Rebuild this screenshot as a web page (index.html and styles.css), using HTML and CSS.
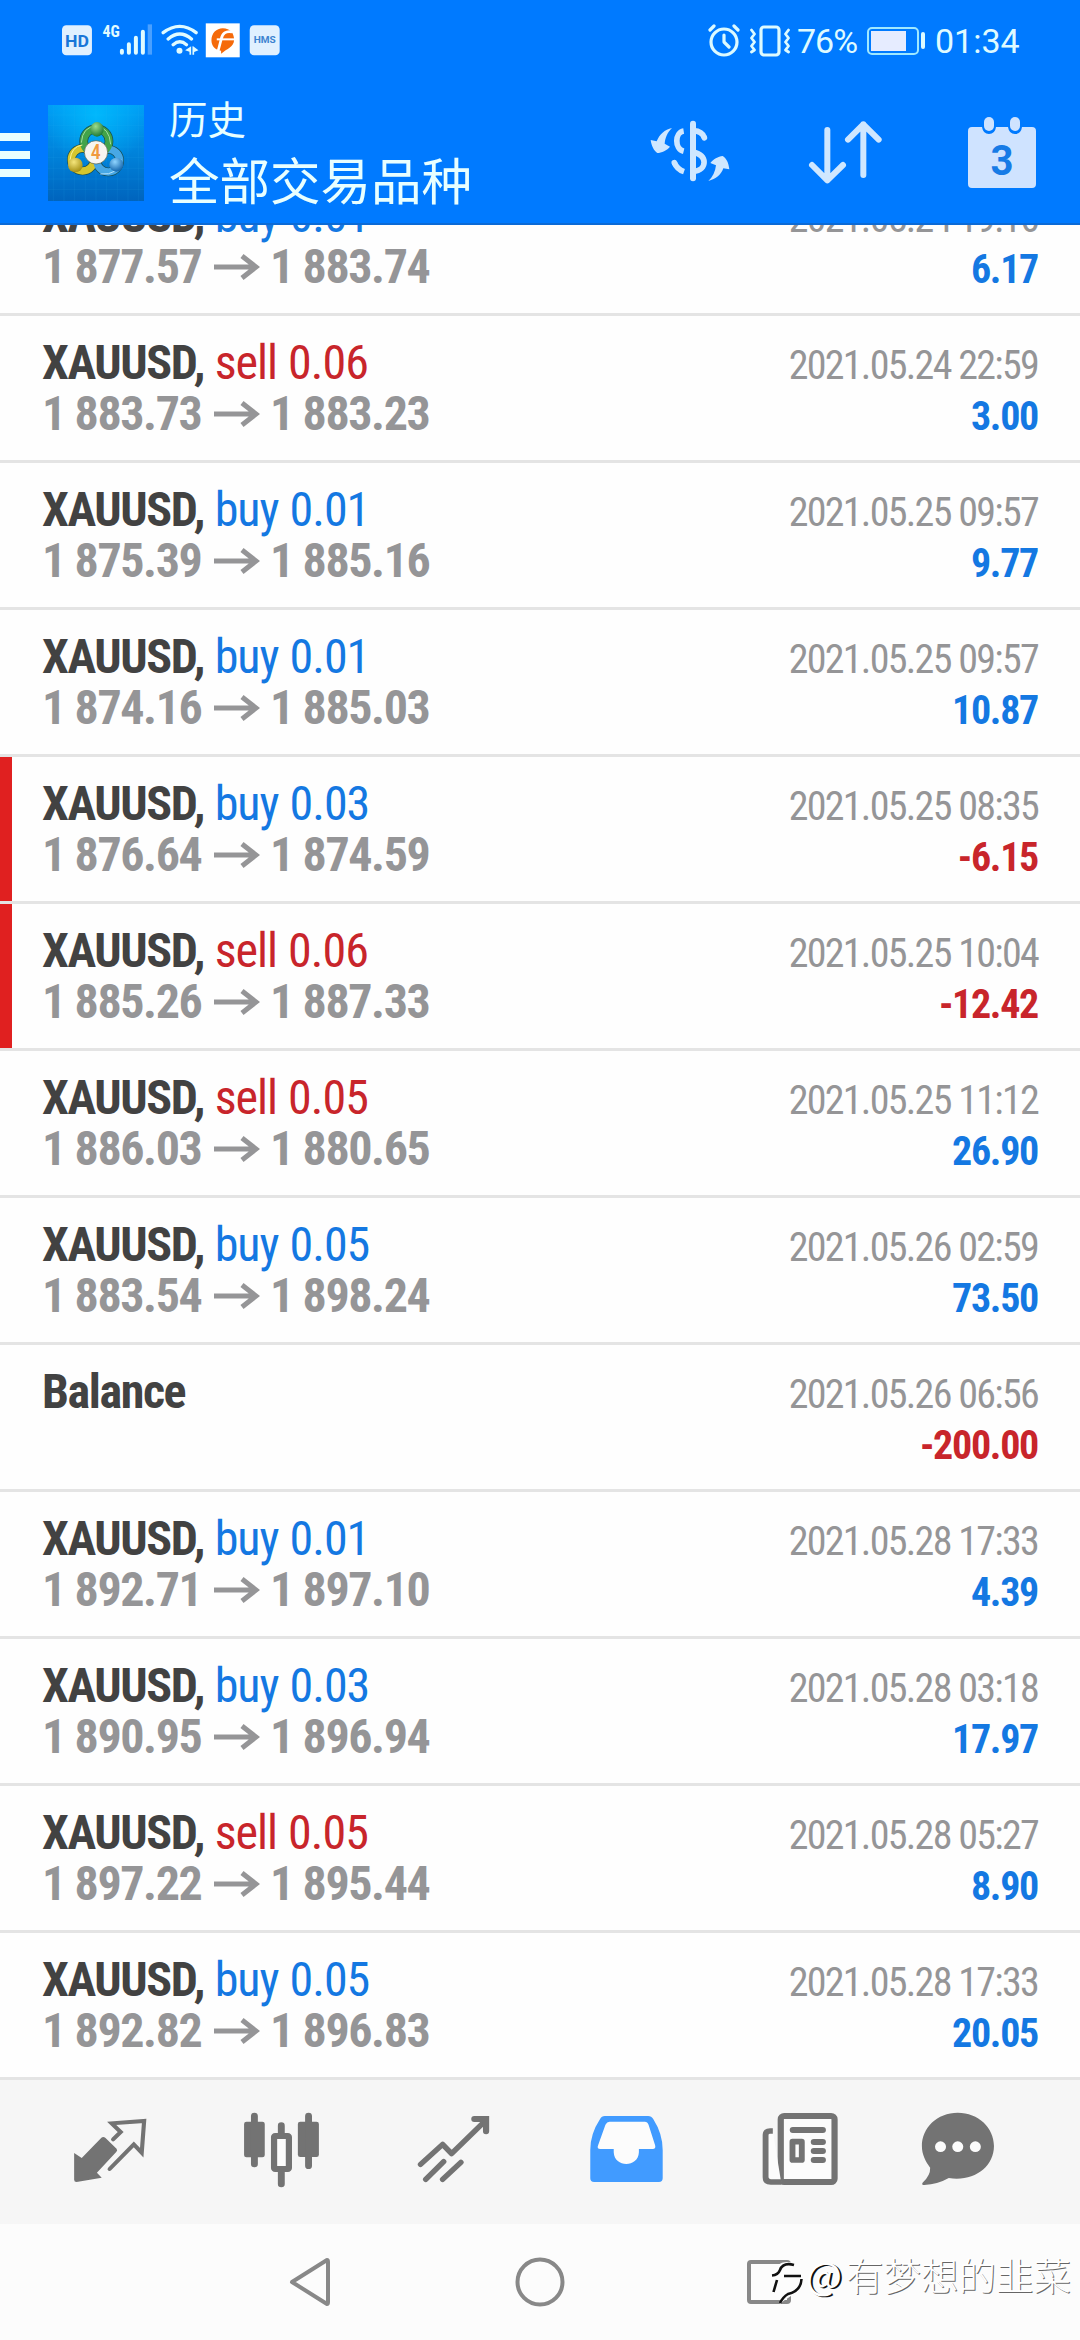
FILE: index.html
```html
<!DOCTYPE html>
<html lang="zh-CN">
<head>
<meta charset="utf-8">
<title>历史</title>
<link rel="stylesheet" href="styles.css">
</head>
<body>
<header class="header">
  <div class="status">
    <svg class="status-left" viewBox="30 20 670 120" width="223" height="40">
      <rect x="36" y="33" width="90" height="90" rx="13" fill="#e0f0ff"/>
      <text x="81" y="98" class="badge-hd" text-anchor="middle" textLength="72" lengthAdjust="spacingAndGlyphs">HD</text>
      <text x="158" y="68" class="badge-4g" textLength="52" lengthAdjust="spacingAndGlyphs">4G</text>
      <g stroke="#e0fbff" stroke-width="12" stroke-linecap="round">
        <path d="M216 109V115M237 90V115M258 70V115M279 52V115"/>
        <path d="M300 30V121" stroke="#4aa0ff" stroke-linecap="butt" stroke-width="13"/>
      </g>
      <g stroke="#e0fbff" stroke-width="10" fill="none" stroke-linecap="round">
        <path d="M340 55Q390 17 439 55M355 74Q390 44 425 74M370 91Q390 74 410 91"/>
      </g>
      <circle cx="389" cy="109" r="9" fill="#e0fbff"/>
      <path d="M424 96V121H419V112L406 108ZM430 96L446 108 433 113V121H428V96Z" fill="#e0fbff"/>
      <rect x="468" y="27" width="102" height="102" fill="#fff"/>
      <path d="M519 42C542 42 553 58 553 76C553 98 532 102 514 118V109C495 107 485 94 485 78C485 57 500 42 519 42Z" fill="#f56a0a"/>
      <path d="M547 53Q519 47 514 76L505 110" fill="none" stroke="#fff" stroke-width="8"/>
      <path d="M501 75H556" fill="none" stroke="#fff" stroke-width="6"/>
      <rect x="600" y="33" width="90" height="90" rx="13" fill="#e0f0ff"/>
      <text x="645" y="87" class="badge-hms" text-anchor="middle" textLength="66" lengthAdjust="spacingAndGlyphs">HMS</text>
    </svg>
    <div class="status-right">
      <svg width="83" height="34" viewBox="0 0 83 34" fill="none" stroke="#dcfaff" stroke-width="3.2" stroke-linecap="round" stroke-linejoin="round">
        <circle cx="16" cy="18" r="13"/><path d="M16 11V18L21 23M2 6L6 2M26 2L30 6"/>
        <rect x="53" y="3" width="18" height="28" rx="3"/>
        <path d="M43.500 6l3 4-3 4 3 4-3 4 3 4-3 2M80.500 6l-3 4 3 4-3 4 3 4-3 4 3 2" stroke-width="2.800"/>
      </svg>
      <span class="percent">76%</span>
      <svg class="battery" width="58" height="28" viewBox="0 0 58 28">
        <rect x="1" y="1" width="50" height="26" rx="4" fill="none" stroke="#9fe8ff" stroke-width="2"/>
        <rect x="4" y="4" width="35" height="20" fill="#e6ecff"/>
        <rect x="54" y="5" width="4" height="17" rx="2" fill="#dcfaff"/>
      </svg>
      <span class="clock">01:34</span>
    </div>
  </div>
  <div class="toolbar">
    <div class="menu"><i></i><i></i><i></i></div>
    <svg class="logo" viewBox="24 30 288 288" width="96" height="96">
      <defs>
        <linearGradient id="bg" x1="0" y1="0" x2="0" y2="1"><stop offset="0" stop-color="#009cf5"/><stop offset=".55" stop-color="#0080d8"/><stop offset="1" stop-color="#0064bd"/></linearGradient>
        <radialGradient id="glow" cx=".5" cy=".1" r=".55"><stop offset="0" stop-color="#00c0ff" stop-opacity=".8"/><stop offset="1" stop-color="#00c0ff" stop-opacity="0"/></radialGradient>
        <radialGradient id="green" cx=".4" cy=".3" r=".7"><stop offset="0" stop-color="#9ddc8c"/><stop offset="1" stop-color="#1f7a35"/></radialGradient>
        <radialGradient id="gold" cx=".4" cy=".3" r=".7"><stop offset="0" stop-color="#f5e67c"/><stop offset="1" stop-color="#a58f14"/></radialGradient>
        <radialGradient id="blue" cx=".4" cy=".3" r=".7"><stop offset="0" stop-color="#8fd4ff"/><stop offset="1" stop-color="#1466ad"/></radialGradient>
      </defs>
      <rect x="24" y="30" width="288" height="288" fill="url(#bg)"/>
      <rect x="24" y="30" width="288" height="288" fill="url(#glow)"/>
      <path d="M40 30V318M72 30V318M104 30V318M136 30V318M168 30V318M200 30V318M232 30V318M264 30V318M296 30V318M24 60H312M24 92H312M24 124H312M24 156H312M24 188H312M24 220H312M24 252H312M24 284H312" stroke="#35b5f5" stroke-opacity=".3"/>
      <g fill="none">
        <g stroke="#174c50" stroke-width="26"><circle cx="169" cy="139" r="38"/><circle cx="128" cy="194" r="34"/><circle cx="205" cy="197" r="34"/></g>
        <circle cx="128" cy="194" r="34" stroke="#d5c62d" stroke-width="22"/>
        <circle cx="205" cy="197" r="34" stroke="#48a8e5" stroke-width="22"/>
        <circle cx="169" cy="139" r="38" stroke="#42a349" stroke-width="22"/>
        <path d="M124 143Q128 94 168 94Q208 96 212 148" stroke="#a4dda0" stroke-width="3"/>
        <path d="M90 196Q94 154 127 150" stroke="#fff39b" stroke-width="3"/>
        <path d="M181 237Q236 242 243 193" stroke="#b6e4ff" stroke-width="3"/>
      </g>
      <ellipse cx="171" cy="103" rx="20" ry="22" fill="url(#green)"/>
      <circle cx="106" cy="210" r="22" fill="url(#gold)"/>
      <circle cx="229" cy="209" r="21" fill="url(#blue)"/>
      <circle cx="168" cy="172" r="35" fill="#f7f5f0" stroke="#4d5a45" stroke-width="2"/>
      <text x="167" y="193" text-anchor="middle" class="logo-number">4</text>
    </svg>
    <div class="titles"><div class="subtitle">历史</div><div class="title">全部交易品种</div></div>
    <svg class="tool-dollar" viewBox="30 30 240 186" width="80" height="62" fill="none" stroke="#cfe7ff" stroke-width="17">
      <path d="M159 41V205" stroke-width="18" stroke-linecap="round"/>
      <path d="M131 63C104 67 103 117 131 124"/><path d="M103 158Q111 178 132 185"/>
      <path d="M103 158L103.100 158.300M193 83L193.100 83.300" stroke-linecap="round"/>
      <path d="M160 62Q187 64 193 83M160 127C202 132 204 181 160 184"/>
      <g fill="#cfe7ff" stroke="none"><path d="M96 54C74 58 58 74 50 94L32 90C34 106 42 123 52 129C64 129 82 120 90 110L74 101C76 83 82 67 96 54Z"/><path d="M205 213C228 207 244 194 250 175L268 178C266 160 260 145 248 138C235 139 219 148 211 159L228 166C226 185 218 201 205 213Z"/></g>
    </svg>
    <svg class="tool-sort" viewBox="500 24 240 204" width="80" height="68" fill="none" stroke="#cfe7ff" stroke-width="18" stroke-linecap="round" stroke-linejoin="round">
      <path d="M564 60V211M518 165L564 211 611 165M672 195V43M626 89L672 43 718 89"/>
    </svg>
    <svg class="tool-calendar" viewBox="0 0 68 71" width="68" height="71">
      <path d="M4 10H14Q15 17 21 17Q27 17 28 10H40Q41 17 47 17Q53 17 54 10H64Q68 10 68 14V67Q68 71 64 71H4Q0 71 0 67V14Q0 10 4 10Z" fill="#cfe3ff"/>
      <rect x="16" y="0" width="10" height="14" rx="5" fill="#cfe3ff"/><rect x="42" y="0" width="10" height="14" rx="5" fill="#cfe3ff"/>
      <text x="34" y="58" text-anchor="middle" class="calendar-day" textLength="23" lengthAdjust="spacingAndGlyphs">3</text>
    </svg>
  </div>
</header>

<svg class="symbols" width="0" height="0">
  <symbol id="arrow" viewBox="0 0 46 26"><path d="M0 13H42M28 2L42 13 28 24" fill="none" stroke="#959597" stroke-width="5"/></symbol>
</svg>

<main class="list">
  <div class="row"><div class="deal"><div class="name"><b>XAUUSD,</b> <span class="buy">buy 0.01</span></div><div class="price"><span>1 877.57</span><svg><use href="#arrow"/></svg><span>1 883.74</span></div></div><div class="result"><div class="date">2021.05.24 19:16</div><div class="profit">6.17</div></div></div>
  <div class="row"><div class="deal"><div class="name"><b>XAUUSD,</b> <span class="sell">sell 0.06</span></div><div class="price"><span>1 883.73</span><svg><use href="#arrow"/></svg><span>1 883.23</span></div></div><div class="result"><div class="date">2021.05.24 22:59</div><div class="profit">3.00</div></div></div>
  <div class="row"><div class="deal"><div class="name"><b>XAUUSD,</b> <span class="buy">buy 0.01</span></div><div class="price"><span>1 875.39</span><svg><use href="#arrow"/></svg><span>1 885.16</span></div></div><div class="result"><div class="date">2021.05.25 09:57</div><div class="profit">9.77</div></div></div>
  <div class="row"><div class="deal"><div class="name"><b>XAUUSD,</b> <span class="buy">buy 0.01</span></div><div class="price"><span>1 874.16</span><svg><use href="#arrow"/></svg><span>1 885.03</span></div></div><div class="result"><div class="date">2021.05.25 09:57</div><div class="profit">10.87</div></div></div>
  <div class="row marked"><div class="deal"><div class="name"><b>XAUUSD,</b> <span class="buy">buy 0.03</span></div><div class="price"><span>1 876.64</span><svg><use href="#arrow"/></svg><span>1 874.59</span></div></div><div class="result"><div class="date">2021.05.25 08:35</div><div class="profit loss">-6.15</div></div></div>
  <div class="row marked"><div class="deal"><div class="name"><b>XAUUSD,</b> <span class="sell">sell 0.06</span></div><div class="price"><span>1 885.26</span><svg><use href="#arrow"/></svg><span>1 887.33</span></div></div><div class="result"><div class="date">2021.05.25 10:04</div><div class="profit loss">-12.42</div></div></div>
  <div class="row"><div class="deal"><div class="name"><b>XAUUSD,</b> <span class="sell">sell 0.05</span></div><div class="price"><span>1 886.03</span><svg><use href="#arrow"/></svg><span>1 880.65</span></div></div><div class="result"><div class="date">2021.05.25 11:12</div><div class="profit">26.90</div></div></div>
  <div class="row"><div class="deal"><div class="name"><b>XAUUSD,</b> <span class="buy">buy 0.05</span></div><div class="price"><span>1 883.54</span><svg><use href="#arrow"/></svg><span>1 898.24</span></div></div><div class="result"><div class="date">2021.05.26 02:59</div><div class="profit">73.50</div></div></div>
  <div class="row"><div class="deal"><div class="name"><b>Balance</b></div></div><div class="result"><div class="date">2021.05.26 06:56</div><div class="profit loss">-200.00</div></div></div>
  <div class="row"><div class="deal"><div class="name"><b>XAUUSD,</b> <span class="buy">buy 0.01</span></div><div class="price"><span>1 892.71</span><svg><use href="#arrow"/></svg><span>1 897.10</span></div></div><div class="result"><div class="date">2021.05.28 17:33</div><div class="profit">4.39</div></div></div>
  <div class="row"><div class="deal"><div class="name"><b>XAUUSD,</b> <span class="buy">buy 0.03</span></div><div class="price"><span>1 890.95</span><svg><use href="#arrow"/></svg><span>1 896.94</span></div></div><div class="result"><div class="date">2021.05.28 03:18</div><div class="profit">17.97</div></div></div>
  <div class="row"><div class="deal"><div class="name"><b>XAUUSD,</b> <span class="sell">sell 0.05</span></div><div class="price"><span>1 897.22</span><svg><use href="#arrow"/></svg><span>1 895.44</span></div></div><div class="result"><div class="date">2021.05.28 05:27</div><div class="profit">8.90</div></div></div>
  <div class="row"><div class="deal"><div class="name"><b>XAUUSD,</b> <span class="buy">buy 0.05</span></div><div class="price"><span>1 892.82</span><svg><use href="#arrow"/></svg><span>1 896.83</span></div></div><div class="result"><div class="date">2021.05.28 17:33</div><div class="profit">20.05</div></div></div>
</main>

<nav class="tabs">
  <svg viewBox="203 156 232 240" preserveAspectRatio="none">
    <path d="M215 279L237 294 294 233Q300 229 306 234L338 266Q342 271 337 276L281 338 295 353 222 366Q215 366 215 359Z" fill="#737373"/>
    <path d="M328 238L350 216 324 190 418 183 411 278 388 253 318 327" fill="none" stroke="#737373" stroke-width="12" stroke-linecap="round"/>
  </svg>
  <svg viewBox="703 156 232 240" preserveAspectRatio="none">
    <g fill="#737373"><rect x="709" y="185" width="60" height="107" rx="7"/><rect x="865" y="185" width="61" height="106" rx="7"/></g>
    <path d="M739 168V312M896 168V317M817 197V225M817 330V372" stroke="#737373" stroke-width="20" stroke-linecap="round"/>
    <rect x="796" y="228" width="43" height="99" rx="3" fill="#fcfcfc" stroke="#737373" stroke-width="18"/>
  </svg>
  <svg viewBox="1202 156 232 240" preserveAspectRatio="none" fill="none" stroke="#737373" stroke-width="16" stroke-linecap="round">
    <path d="M1221 313L1285 253 1311 281 1404 187" stroke-linejoin="round"/><path d="M1377 177H1411V214" stroke-width="18"/>
    <path d="M1236 358L1288 305M1285 358L1338 307"/>
  </svg>
  <svg viewBox="133.600 156 232 240" preserveAspectRatio="none">
    <path fill="#419bff" d="M188 168H314Q323 168 329 178Q356 222 356 270V355Q356 366 345 366H157Q146 366 146 355V270Q146 222 174 178Q179 168 188 168Z"/>
    <path fill="#fcfcfc" d="M202 185Q194 185 190 194L169 255Q164 267 175 267H214V277C216 324 285 324 287 277V267H327Q337 267 334 256L315 194Q312 185 304 185Z"/>
  </svg>
  <svg viewBox="633 156 232 240" preserveAspectRatio="none">
    <rect x="699" y="168" width="156" height="198" rx="10" fill="#fcfcfc" stroke="#737373" stroke-width="18"/>
    <path d="M676 213H668Q655 213 655 225V352Q655 366 670 366H700" fill="#fcfcfc" stroke="#737373" stroke-width="17"/>
    <path d="M734 210H821M795 246H821M795 273H821M795 300H821" stroke="#737373" stroke-width="18" stroke-linecap="round"/>
    <rect x="733" y="245" width="27" height="55" fill="#fcfcfc" stroke="#737373" stroke-width="17" stroke-linejoin="round"/>
  </svg>
  <svg viewBox="1132.500 156 232 240" preserveAspectRatio="none">
    <path d="M1213 158C1273 158 1318 203 1318 258C1318 322 1258 366 1187 354Q1155 373 1116 375Q1107 375 1111 368Q1134 346 1133 323C1120 305 1109 284 1109 258C1109 203 1153 158 1213 158Z" fill="#737373"/>
    <g fill="#fcfcfc"><circle cx="1163" cy="260" r="16"/><circle cx="1213" cy="260" r="16"/><circle cx="1264" cy="260" r="16"/></g>
  </svg>
</nav>

<footer class="system">
  <svg viewBox="-31 -30 60 60"><path d="M-19 0L16 -22Q17 -22 17 -20V20Q17 22 16 22Z"/></svg>
  <svg viewBox="-30 -30 60 60"><circle r="22.500"/></svg>
  <svg viewBox="-31 -30 60 60"><rect x="-22" y="-20" width="40" height="40" rx="2"/></svg>
  <div class="watermark">
    <svg width="34" height="44" viewBox="0 0 34 44">
      <path d="M16 1C28 1 33 10 31 21C28 33 16 36 9 43V37C0 36 -4 26 -1 16C2 7 8 1 16 1Z" fill="#fdfdfd"/>
      <path d="M23 4Q12 1 9 9Q7 14 1 14.500M6 19L2.500 31M13 15H30M30.500 18Q30 30 17 33Q12 36 9 42" fill="none" stroke="#111" stroke-width="2.600"/>
    </svg>
    <span class="at">@</span><span>有梦想的韭菜</span>
  </div>
</footer>
</body>
</html>
```
FILE: styles.css
```css
* { box-sizing: border-box; }

body {
  margin: 0;
  width: 1080px;
  height: 2340px;
  display: flex;
  flex-direction: column;
  overflow: hidden;
  background: #fefefe;
  font-family: "Roboto Condensed", Roboto, "Noto Sans CJK SC", sans-serif;
}

svg { display: block; flex: none; }
.symbols { display: none; }

.header {
  height: 225px;
  flex: none;
  background: #007aff;
  border-bottom: 2px solid #0b6ad6;
  color: #e8ffff;
}

.status {
  height: 82px;
  display: flex;
  justify-content: space-between;
  align-items: center;
  padding: 0 62px 0 60px;
}

.status-right {
  display: flex;
  align-items: center;
  font: 34px/40px Roboto, sans-serif;
  color: #dffaff;
}

.percent { margin-left: 6px; width: 70px; letter-spacing: -1px; }
.clock { margin-left: 10px; width: 83px; }

.badge-hd { font: 700 50px Roboto, sans-serif; fill: #1976d8; }
.badge-4g { font: 700 50px "Roboto Condensed", sans-serif; fill: #e0fbff; }
.badge-hms { font: 700 27px Roboto, sans-serif; fill: #3c83d0; }

.toolbar {
  height: 141px;
  display: flex;
  align-items: flex-start;
}

.menu {
  width: 30px;
  margin: 51px 18px 0 0;
  display: flex;
  flex-direction: column;
  gap: 10px;
}

.menu i { height: 8px; background: #e8ffff; }
.logo { margin-top: 23px; }
.logo-number { font: 500 60px "Roboto Condensed", sans-serif; fill: #f09a3e; }

.titles {
  width: 482px;
  padding: 7px 0 0 25px;
  font-family: "Noto Sans CJK SC", sans-serif;
  color: #e8ffff;
}

.subtitle { font-size: 38.500px; line-height: 56px; }
.title { font-size: 50.500px; line-height: 66px; }

.tool-dollar { margin-top: 38px; margin-left: 24px; }
.tool-sort { margin-top: 36px; margin-left: 76px; }
.tool-calendar { margin-top: 35px; margin-left: 82px; }
.calendar-day { font: 700 43px Roboto, sans-serif; fill: #177be6; }

.list {
  height: 1855px;
  flex: none;
  overflow: hidden;
  display: flex;
  flex-direction: column;
}

.row {
  height: 147px;
  flex: none;
  display: flex;
  justify-content: space-between;
  padding: 0 42px;
  border-bottom: 3px solid #e4e4e4;
}

.row:first-child { margin-top: -56px; }

.marked { background: linear-gradient(#e02020, #e02020) left / 12px 100% no-repeat padding-box; }

.deal { padding-top: 21px; font-size: 48px; line-height: 51px; }
.name { color: #424242; letter-spacing: -1.400px; word-spacing: 1px; }
.buy { color: #1478e2; letter-spacing: -1px; }
.sell { color: #c8252b; letter-spacing: -1px; }

.price {
  display: flex;
  align-items: center;
  color: #959597;
  font-weight: 700;
  letter-spacing: -1.400px;
}

.price span { width: 172px; }
.price span:last-child { width: auto; }
.price svg { width: 46px; height: 26px; margin-right: 10px; }

.result {
  padding-top: 24px;
  text-align: right;
  font-size: 40px;
  line-height: 51px;
}

.date { color: #959597; letter-spacing: -1.700px; }
.profit { color: #1478e2; font-weight: 700; letter-spacing: -1.300px; }
.loss { color: #c8252b; }

.tabs {
  height: 144px;
  flex: none;
  display: flex;
  justify-content: space-between;
  align-items: center;
  padding: 0 70px;
  background: #f6f6f6;
}

.tabs svg { width: 80px; height: 80px; overflow: visible; }

.system {
  position: relative;
  flex: 1;
  display: flex;
  justify-content: center;
  align-items: center;
  gap: 170px;
  background: #fcfcfc;
}

.system > svg { width: 60px; height: 60px; fill: none; stroke: #888; stroke-width: 4; stroke-linejoin: round; }

.watermark {
  position: absolute;
  left: 771px;
  top: 28px;
  display: flex;
  align-items: flex-start;
  font: 300 37.500px/44px "Noto Sans CJK SC", sans-serif;
  color: #fff;
  text-shadow: 1px 1px 0 #666;
  white-space: nowrap;
}

.watermark svg { margin-top: 9px; }
.watermark .at { width: 41px; padding-left: 1px; font-weight: 400; font-size: 38px; text-shadow: 2px 1px 0 #111; }
```
